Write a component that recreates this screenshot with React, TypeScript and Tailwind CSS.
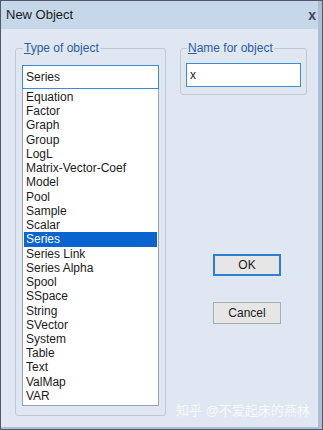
const types = [
  'Equation', 'Factor', 'Graph', 'Group', 'LogL', 'Matrix-Vector-Coef', 'Model', 'Pool',
  'Sample', 'Scalar', 'Series', 'Series Link', 'Series Alpha', 'Spool', 'SSpace', 'String',
  'SVector', 'System', 'Table', 'Text', 'ValMap', 'VAR',
];

const font = { fontFamily: '"Liberation Sans", "Noto Sans CJK SC", sans-serif' };

export default function App() {
  const selected = 'Series';

  return (
    <div className="w-[323px] h-[430px] bg-[#4d5968] p-[1px]" style={font}>
      <div className="h-full flex flex-col bg-[#dfe7f2] border-r-[4px] border-b-[2px] border-[#aebfd3]">
        {/* title bar */}
        <div className="h-[28px] flex items-center justify-between pl-[5px] pr-[2px] bg-[#c7d7ea]">
          <span className="text-[13px] text-[#1b1b1b]">New Object</span>
          <span className="text-[14px] font-bold text-[#3c4656]">x</span>
        </div>

        <div className="flex flex-1 pt-[12px]">
          {/* left group */}
          <fieldset className="ml-[14px] w-[151px] h-[375px] border border-[#c3c9d1] rounded-[3px] px-[6px] pb-[7px]">
            <legend className="ml-[1px] px-[1px] text-[12px] leading-[14px] text-[#2d5ca6]">
              <span className="underline">T</span>ype of object
            </legend>
            <div className="mt-[10px] h-[24px] border border-[#3d8ad6] bg-white flex items-center px-[3px] text-[12px] text-[#1b1b1b]">
              Series
            </div>
            <div className="h-[317px] border border-[#9aa3ad] border-t-0 bg-white pt-[1px] px-[1px] text-[12px] text-[#1b1b1b]">
              {types.map(t => (
                <div
                  key={t}
                  className={`h-[14.24px] leading-[14px] pl-[2px] whitespace-nowrap ${
                    t === selected ? 'bg-[#0a64cf] text-white' : ''
                  }`}
                >
                  {t}
                </div>
              ))}
            </div>
          </fieldset>

          {/* right column */}
          <div className="ml-[14px] flex flex-col">
            <fieldset className="w-[127px] h-[54px] border border-[#c3c9d1] rounded-[3px] px-[5px]">
              <legend className="ml-[1px] px-[1px] text-[12px] leading-[14px] text-[#2d5ca6]">
                <span className="underline">N</span>ame for object
              </legend>
              <div className="mt-[8px] h-[24px] border border-[#3d8ad6] bg-white flex items-center px-[3px] text-[12px] text-[#1b1b1b]">
                x
              </div>
            </fieldset>

            <div className="ml-[33px] mt-[159px] flex flex-col gap-[26px]">
              <button className="w-[68px] h-[22px] border-2 border-[#2f7fd0] bg-[#e6e6e6] text-[12px] text-[#1b1b1b]">
                OK
              </button>
              <button className="w-[68px] h-[22px] border border-[#acacac] bg-[#e6e6e6] text-[12px] text-[#1b1b1b]">
                Cancel
              </button>
            </div>

            <div className="mt-auto mb-[7px] ml-[-4px] text-[13px] text-white/75">
              知乎 @不爱起床的燕林
            </div>
          </div>
        </div>
      </div>
    </div>
  );
}
